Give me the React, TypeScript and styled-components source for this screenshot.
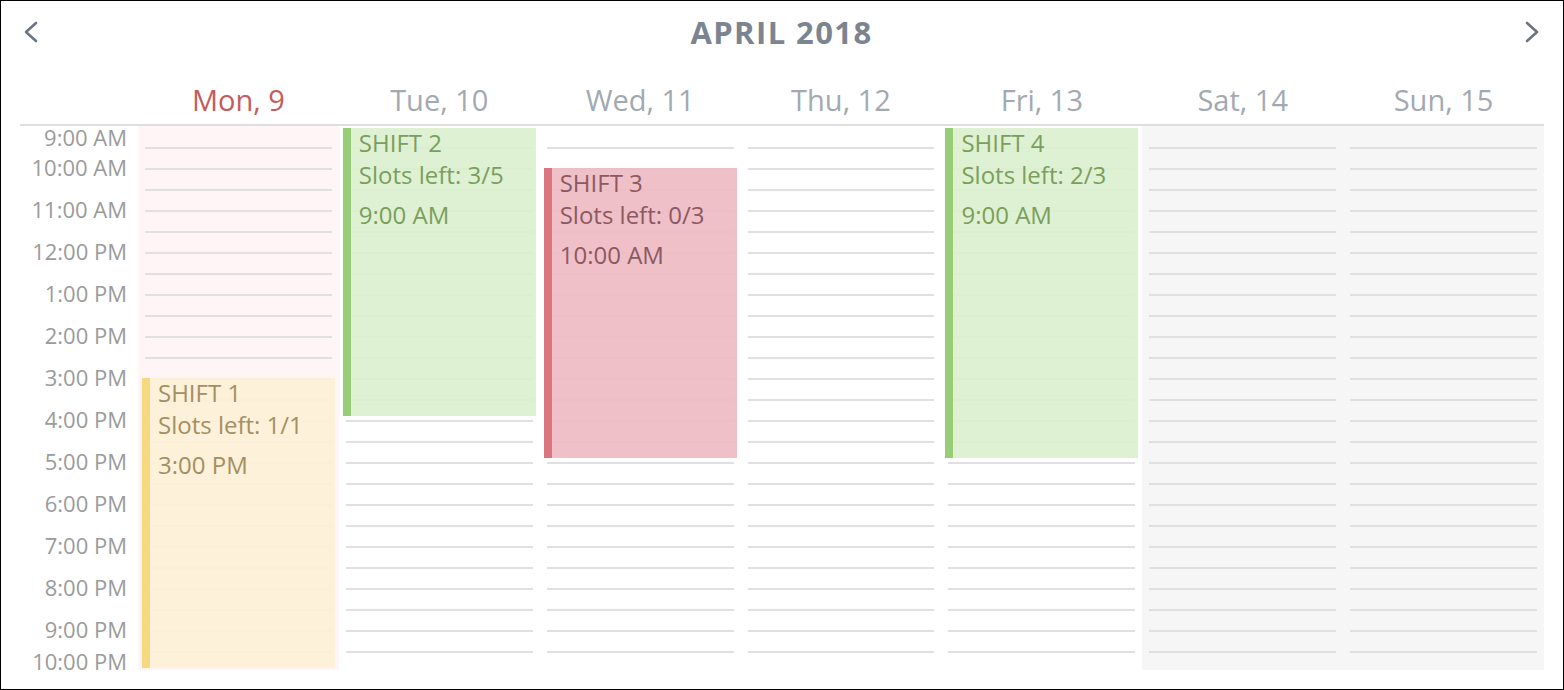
import styled, { createGlobalStyle } from 'styled-components'

const HOUR = 42
const START_HOUR = 9

const GlobalStyle = createGlobalStyle`
    html, body {
        margin: 0;
        padding: 0;
        background: #fff;
        font-family: "Open Sans", "Noto Sans", sans-serif;
    }
`

const Frame = styled.div`
    width: 1564px;
    height: 690px;
    box-sizing: border-box;
    border: 1px solid #000;
    padding: 0 19px;
    overflow: hidden;
`

const TopBar = styled.div`
    height: 62px;
    display: flex;
    align-items: center;
    justify-content: space-between;
    padding: 0 5px 0 4px;
`

const Title = styled.h1`
    margin: 0;
    font-size: 31px;
    font-weight: 700;
    letter-spacing: 1.4px;
    color: #7b8491;
`

const NavButton = styled.button`
    border: none;
    background: none;
    padding: 0;
    width: 14px;
    height: 22px;
    display: flex;
    align-items: center;
    justify-content: center;
    cursor: pointer;
`

const DayRow = styled.div`
    display: grid;
    grid-template-columns: 118px repeat(7, 1fr);
    height: 61px;
    border-bottom: 2px solid #dedede;
`

const DayName = styled.div<{ $today?: boolean }>`
    align-self: end;
    padding-bottom: 4px;
    line-height: 40px;
    text-align: center;
    font-size: 29px;
    color: ${p => p.$today ? '#c65b5c' : '#a3a9b1'};
`

const Body = styled.div`
    display: grid;
    grid-template-columns: 118px repeat(7, 1fr);
    grid-template-rows: 544px;
    height: 544px;
`

const TimeCol = styled.div`
    display: flex;
    flex-direction: column;
    align-items: flex-end;
    min-height: 0;
    margin-top: -1.5px;
    padding-right: 11px;
    font-size: 22px;
    color: #9b9b9b;
`

const TimeLabel = styled.div<{ $edge?: 'first' | 'last' }>`
    white-space: nowrap;
    height: ${p => p.$edge === 'first' ? '21.5px' : p.$edge === 'last' ? '23px' : `${HOUR}px`};
    line-height: ${p => p.$edge === 'first' ? '18px' : p.$edge === 'last' ? '23px' : `${HOUR}px`};
    padding-top: ${p => p.$edge === 'first' ? '3.5px' : '0'};
    box-sizing: border-box;
    flex-shrink: 0;
`

const tones = {
    today: '#fff4f6',
    weekend: '#f6f6f6',
    normal: 'transparent',
}

const DayCol = styled.div<{ $tone: keyof typeof tones }>`
    position: relative;
    overflow: hidden;
    background: ${p => tones[p.$tone]};
`

const Slot = styled.div<{ $first?: boolean }>`
    box-sizing: border-box;
    height: ${p => p.$first ? '20.5px' : '21px'};
    margin: 0 7px;
    border-top: ${p => p.$first ? 'none' : '2px solid #e0e0e0'};
`

const palette = {
    green: { bg: 'rgba(219, 239, 206, 0.9)', bar: '#97cd76', text: '#7a9f5c' },
    red: { bg: 'rgba(238, 187, 195, 0.92)', bar: '#db7680', text: '#8c5962' },
    yellow: { bg: 'rgba(253, 240, 214, 0.92)', bar: '#f7d881', text: '#a48f62' },
}

const Event = styled.div<{ $color: keyof typeof palette }>`
    position: absolute;
    left: 4px;
    right: 4px;
    box-sizing: border-box;
    background: ${p => palette[p.$color].bg};
    border-left: 8px solid ${p => palette[p.$color].bar};
    padding-left: 8px;
    color: ${p => palette[p.$color].text};
    font-size: 24px;
    white-space: nowrap;
`

const EventTitle = styled.div`
    line-height: 30px;
`

const EventSlots = styled.div`
    line-height: 34px;
`

const EventTime = styled.div`
    margin-top: 6px;
    line-height: 34px;
`

type Shift = {
    name: string
    day: number
    start: number
    end: number
    slots: string
    color: keyof typeof palette
}

const days = [
    { label: 'Mon, 9', tone: 'today' as const },
    { label: 'Tue, 10', tone: 'normal' as const },
    { label: 'Wed, 11', tone: 'normal' as const },
    { label: 'Thu, 12', tone: 'normal' as const },
    { label: 'Fri, 13', tone: 'normal' as const },
    { label: 'Sat, 14', tone: 'weekend' as const },
    { label: 'Sun, 15', tone: 'weekend' as const },
]

const shifts: Shift[] = [
    { name: 'SHIFT 1', day: 0, start: 15, end: 22, slots: '1/1', color: 'yellow' },
    { name: 'SHIFT 2', day: 1, start: 9, end: 16, slots: '3/5', color: 'green' },
    { name: 'SHIFT 3', day: 2, start: 10, end: 17, slots: '0/3', color: 'red' },
    { name: 'SHIFT 4', day: 4, start: 9, end: 17, slots: '2/3', color: 'green' },
]

const hourLabels = ['9:00 AM', '10:00 AM', '11:00 AM', '12:00 PM', '1:00 PM', '2:00 PM', '3:00 PM',
    '4:00 PM', '5:00 PM', '6:00 PM', '7:00 PM', '8:00 PM', '9:00 PM', '10:00 PM']

const formatHour = (h: number) => {
    const suffix = h >= 12 ? 'PM' : 'AM'
    const hh = h % 12 === 0 ? 12 : h % 12
    return `${hh}:00 ${suffix}`
}

const Chevron = ({ dir }: { dir: 'left' | 'right' }) => (
    <svg width="14" height="22" viewBox="0 0 14 22">
        <polyline
            points={dir === 'left' ? '12,2 2,11 12,20' : '2,2 12,11 2,20'}
            fill="none"
            stroke="#6b7482"
            strokeWidth="2.6"
            strokeLinecap="round"
            strokeLinejoin="round"
        />
    </svg>
)

export default function App() {
    return (
        <>
            <GlobalStyle />
            <Frame>
                <TopBar>
                    <NavButton aria-label="Previous week"><Chevron dir="left" /></NavButton>
                    <Title>APRIL 2018</Title>
                    <NavButton aria-label="Next week"><Chevron dir="right" /></NavButton>
                </TopBar>
                <DayRow>
                    <div />
                    { days.map(d => <DayName key={ d.label } $today={ d.tone === 'today' }>{ d.label }</DayName>) }
                </DayRow>
                <Body>
                    <TimeCol>
                        { hourLabels.map((l, i) => (
                            <TimeLabel key={ l } $edge={ i === 0 ? 'first' : i === hourLabels.length - 1 ? 'last' : undefined }>{ l }</TimeLabel>
                        )) }
                    </TimeCol>
                    { days.map((d, di) => (
                        <DayCol key={ d.label } $tone={ d.tone }>
                            { Array.from({ length: 26 }, (_, i) => <Slot key={ i } $first={ i === 0 } />) }
                            { shifts.filter(s => s.day === di).map(s => {
                                const top = s.start === START_HOUR ? 2 : (s.start - START_HOUR) * HOUR
                                const bottom = (s.end - START_HOUR) * HOUR - 4.5
                                return (
                                    <Event key={ s.name } $color={ s.color } style={ { top, height: bottom - top } }>
                                        <EventTitle>{ s.name }</EventTitle>
                                        <EventSlots>Slots left: { s.slots }</EventSlots>
                                        <EventTime>{ formatHour(s.start) }</EventTime>
                                    </Event>
                                )
                            }) }
                        </DayCol>
                    )) }
                </Body>
            </Frame>
        </>
    )
}
